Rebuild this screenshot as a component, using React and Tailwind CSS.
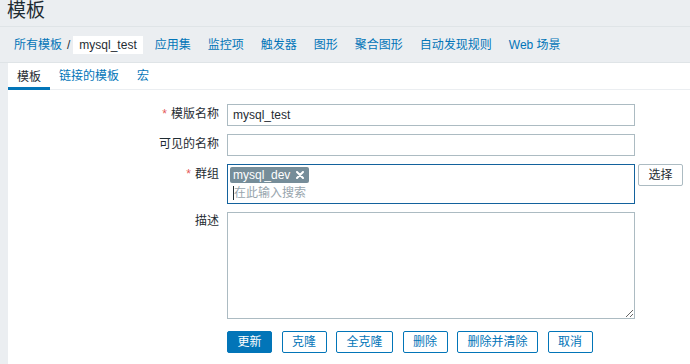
import React from "react"

const navItems = ["应用集", "监控项", "触发器", "图形", "聚合图形", "自动发现规则", "Web 场景"]
const actions = ["克隆", "全克隆", "删除", "删除并清除", "取消"]

function Label({ children, required, h = "h-[20px]" }) {
  return (
    <div className={`w-[211px] ${h} flex items-center justify-end shrink-0`}>
      {required && <span className="text-[#e45959] mr-[4px]">*</span>}
      <span>{children}</span>
    </div>
  )
}

export default function App() {
  return (
    <div className="w-[690px] h-[364px] overflow-hidden flex flex-col bg-[#ebeef1] text-[#1f2c33] text-[12px] font-['Liberation_Sans','Noto_Sans_CJK_SC',sans-serif]">
      {/* Header */}
      <div className="h-[27px] shrink-0 pl-[7px] border-b border-[#dfe4e7]">
        <h1 className="text-[19px] leading-[22px]">模板</h1>
      </div>

      {/* Nav */}
      <div className="h-[36px] shrink-0 flex items-center pl-[14px] border-b border-[#dfe4e7]">
        <a className="text-[#0275b8]">所有模板</a>
        <span className="ml-[5px] mr-[3px]">/</span>
        <span className="h-[18px] px-[6px] bg-white flex items-center text-[#1f2c33]">mysql_test</span>
        <div className="flex gap-[17px] ml-[12px]">
          {navItems.map((n) => (
            <a key={n} className="text-[#0275b8]">{n}</a>
          ))}
        </div>
      </div>

      {/* Panel */}
      <div className="flex-1 ml-[8px] bg-white">
        <div className="flex h-[27px] border-b border-[#ebeef1]">
          <div className="h-[27px] -mb-px px-[9px] pt-[3px] flex items-center border-b-[3px] border-[#0275b8]">模板</div>
          <a className="h-[26px] px-[9px] flex items-center text-[#0275b8]">链接的模板</a>
          <a className="h-[26px] px-[9px] flex items-center text-[#0275b8]">宏</a>
        </div>

        <div className="pt-[14px] flex flex-col gap-[8px]">
          <div className="flex gap-[8px]">
            <Label required>模版名称</Label>
            <input
              readOnly
              defaultValue="mysql_test"
              className="w-[408px] h-[22px] border border-[#acbbc2] px-[5px] outline-none text-[12px]"
            />
          </div>

          <div className="flex gap-[8px]">
            <Label>可见的名称</Label>
            <input readOnly className="w-[408px] h-[22px] border border-[#acbbc2] px-[5px] outline-none" />
          </div>

          <div className="flex gap-[8px]">
            <Label required>群组</Label>
            <div className="w-[408px] h-[40px] border border-[#13629d] pl-[2px] pt-[2px] flex flex-col">
              <div className="flex">
                <span className="h-[16px] pl-[3px] pr-[5px] rounded-[2px] bg-[#768d99] text-white flex items-center gap-[6px]">
                  mysql_dev
                  <svg width="8" height="8" viewBox="0 0 8 8">
                    <path d="M1 1 L7 7 M7 1 L1 7" stroke="#fff" strokeWidth="2" strokeLinecap="round" />
                  </svg>
                </span>
              </div>
              <div className="flex items-center h-[18px] mt-[1px] pl-[3px]">
                <span className="w-px h-[14px] bg-[#1f2c33]" />
                <span className="text-[#98a5ad]">在此输入搜索</span>
              </div>
            </div>
            <button className="ml-[-5px] w-[45px] h-[22px] border border-[#acbbc2] rounded-[2px] bg-white text-[#1f2c33]">
              选择
            </button>
          </div>

          <div className="flex gap-[8px]">
            <Label h="h-[18px]">描述</Label>
            <textarea readOnly className="w-[408px] h-[107px] border border-[#acbbc2] outline-none resize" />
          </div>
        </div>

        <div className="ml-[219px] mt-[12px] flex gap-[9.5px]">
          <button className="h-[22px] px-[9.5px] rounded-[2px] border border-[#0275b8] bg-[#0275b8] text-white">更新</button>
          {actions.map((a) => (
            <button key={a} className="h-[22px] px-[9.5px] rounded-[2px] border border-[#0275b8] bg-white text-[#0275b8]">
              {a}
            </button>
          ))}
        </div>
      </div>
    </div>
  )
}
